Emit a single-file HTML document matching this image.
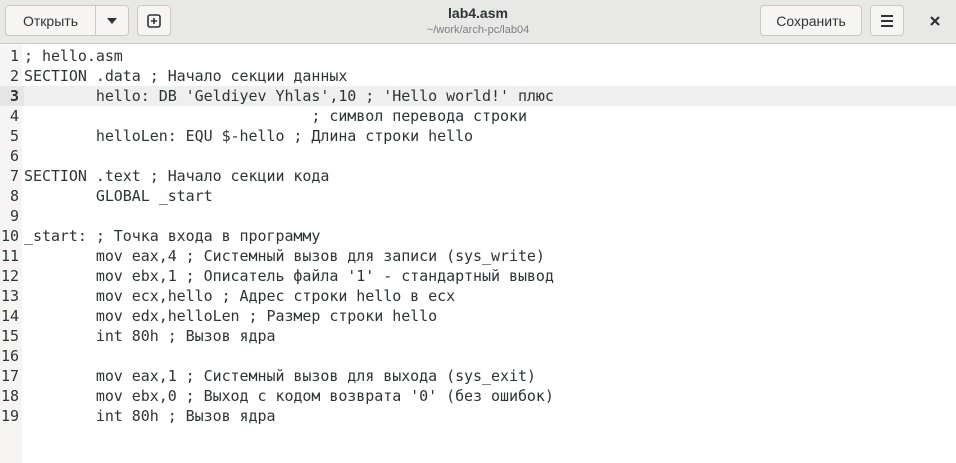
<!DOCTYPE html><html><head><style>
body{margin:0;width:956px;height:463px;overflow:hidden;background:#fff;font-family:"Liberation Sans",sans-serif}
.hb{position:absolute;top:0;left:0;width:956px;height:44px;background:#e8e8e7;border-bottom:1px solid #cdc7c2;box-sizing:border-box}
.btn{position:absolute;top:5px;height:31px;background:#f6f5f4;border:1px solid #cdc7c2;border-radius:4px;box-sizing:border-box;font-size:14px;color:#2e3436;display:flex;align-items:center;justify-content:center}
.t{position:absolute;left:0;width:956px;text-align:center}
.gut{position:absolute;top:45px;left:0;width:22px;height:418px;background:#f6f5f4}
.code{position:absolute;top:46px;left:0;font-family:"DejaVu Sans Mono",monospace;font-size:15px;letter-spacing:-0.05px;line-height:20px;color:#2e3436}
.ln{display:flex;height:20px;white-space:pre}
.n{width:19px;text-align:right;padding-right:5px;color:#2e3436;flex:none}
.cur{background:#efefef;width:956px}
.cur .n{font-weight:bold;background:#e6e6e6}
</style></head><body>
<div class="hb">
<div class="btn" style="left:5px;width:91px;border-radius:4px 0 0 4px">Открыть</div>
<div class="btn" style="left:95px;width:34px;border-radius:0 4px 4px 0"><svg width="12" height="8"><path d="M1 1h10l-5 6z" fill="#2e3436"/></svg></div>
<div class="btn" style="left:137px;width:34px"><svg width="16" height="16"><rect x="2" y="2" width="12" height="12" rx="2" fill="none" stroke="#2e3436" stroke-width="1.6"/><path d="M8 5v6M5 8h6" stroke="#2e3436" stroke-width="1.6"/></svg></div>
<div class="t" style="top:5px;font-size:14px;font-weight:bold;color:#2e3436">lab4.asm</div>
<div class="t" style="top:24px;font-size:11px;color:#7b7e7f">~/work/arch-pc/lab04</div>
<div class="btn" style="left:760px;width:102px">Сохранить</div>
<div class="btn" style="left:870px;width:34px"><svg width="16" height="14"><path d="M2 2h12M2 7h12M2 12h12" stroke="#2e3436" stroke-width="2"/></svg></div>
<div style="position:absolute;left:929px;top:14px"><svg width="12" height="12"><path d="M2 2l8 8M10 2l-8 8" stroke="#2e3436" stroke-width="2.2"/></svg></div>
</div>
<div class="gut"></div>
<div class="code"><div class="ln"><span class="n">1</span>; hello.asm</div><div class="ln"><span class="n">2</span>SECTION .data ; Начало секции данных</div><div class="ln cur"><span class="n">3</span>        hello: DB 'Geldiyev Yhlas',10 ; 'Hello world!' плюс</div><div class="ln"><span class="n">4</span>                                ; символ перевода строки</div><div class="ln"><span class="n">5</span>        helloLen: EQU $-hello ; Длина строки hello</div><div class="ln"><span class="n">6</span></div><div class="ln"><span class="n">7</span>SECTION .text ; Начало секции кода</div><div class="ln"><span class="n">8</span>        GLOBAL _start</div><div class="ln"><span class="n">9</span></div><div class="ln"><span class="n">10</span>_start: ; Точка входа в программу</div><div class="ln"><span class="n">11</span>        mov eax,4 ; Системный вызов для записи (sys_write)</div><div class="ln"><span class="n">12</span>        mov ebx,1 ; Описатель файла '1' - стандартный вывод</div><div class="ln"><span class="n">13</span>        mov ecx,hello ; Адрес строки hello в ecx</div><div class="ln"><span class="n">14</span>        mov edx,helloLen ; Размер строки hello</div><div class="ln"><span class="n">15</span>        int 80h ; Вызов ядра</div><div class="ln"><span class="n">16</span></div><div class="ln"><span class="n">17</span>        mov eax,1 ; Системный вызов для выхода (sys_exit)</div><div class="ln"><span class="n">18</span>        mov ebx,0 ; Выход с кодом возврата '0' (без ошибок)</div><div class="ln"><span class="n">19</span>        int 80h ; Вызов ядра</div></div>
</body></html>
